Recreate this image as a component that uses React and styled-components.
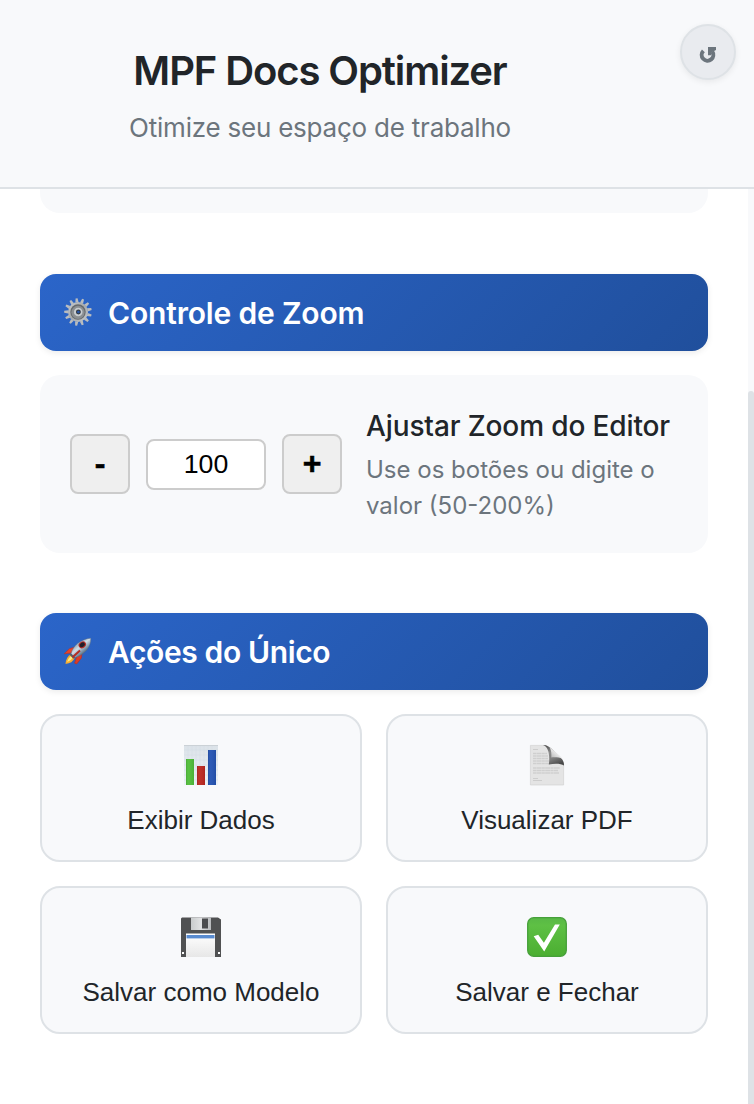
import React from "react";
import styled, { createGlobalStyle } from "styled-components";

const Global = createGlobalStyle`
  * { box-sizing: border-box; }
  body { margin: 0; background: #fff; font-family: Inter, "Liberation Sans", sans-serif; color: #212529; overflow: hidden; }
  h1, h2, h3, p { margin: 0; }
`;
const Popup = styled.div`
  display: flex; flex-direction: column; width: 754px; height: 1104px; overflow: hidden;
`;
const Header = styled.header`
  display: flex; justify-content: space-between; align-items: flex-start;
  flex: 0 0 189px; padding: 24px 18px 0 0;
  background: #f8f9fb; border-bottom: 2px solid #dee2e6;
`;
const Titles = styled.div`
  width: 640px; padding-top: 23px; text-align: center;
`;
const Title = styled.h1`
  font-size: 40px; line-height: 48px; font-weight: 600; letter-spacing: -1.1px; white-space: nowrap;
`;
const Subtitle = styled.p`
  margin-top: 14px; font-size: 26px; line-height: 38px; color: #6c757d; letter-spacing: -0.22px; white-space: nowrap;
`;
const ResetButton = styled.button`
  display: flex; align-items: center; justify-content: center;
  width: 56px; height: 56px; padding: 6px 0 0; border-radius: 50%;
  background: #e9ebef; border: 2px solid #dee2e6; box-shadow: 0 2px 6px rgba(0,0,0,.07);
`;
const Body = styled.div`
  display: flex; flex: 1; min-height: 0;
`;
const Content = styled.main`
  flex: 1; padding: 0 40px;
`;
const PreviousCard = styled.div`
  height: 24px; background: #f8f9fb; border-radius: 0 0 20px 20px; margin-bottom: 61px;
`;
const Scrollbar = styled.div`
  width: 6px; padding-top: 202px; background: #f8f9fb;
`;
const Thumb = styled.div`
  height: 800px; border-radius: 6px; background: #dee2e6;
`;
const SectionHeader = styled.h2`
  display: flex; align-items: center; gap: 16px; height: 77px; padding: 0 24px;
  margin-bottom: 24px; border-radius: 16px; color: #fff;
  background: linear-gradient(135deg, #2b65c9, #204f9c);
  box-shadow: 0 2px 6px rgba(0,0,0,.08);
  font-size: 30px; line-height: 40px; font-weight: 600; letter-spacing: ${p => p.$spacing}px; white-space: nowrap;
  svg { flex: none; position: relative; top: -1px; }
`;
const ZoomCard = styled.section`
  display: flex; align-items: center; gap: 24px; height: 178px; padding: 0 30px;
  margin-bottom: 60px; border-radius: 20px; background: #f8f9fb;
`;
const Stepper = styled.div`
  display: flex; align-items: center; gap: 16px; flex: none;
`;
const StepButton = styled.button`
  width: 60px; height: 60px; padding: 0 0 2px; border: 2px solid #ccc; border-radius: 8px;
  background: #efefef; color: #000; font: bold 32px "Liberation Sans", Arial, sans-serif;
  -webkit-text-stroke: 0.6px #000;
`;
const ZoomInput = styled.input`
  width: 120px; height: 51px; padding: 0; border: 2px solid #ccc; border-radius: 8px;
  background: #fff; color: #000; text-align: center; font: 26.7px "Liberation Sans", Arial, sans-serif;
`;
const ZoomText = styled.div`
  flex: 1; white-space: nowrap; padding-top: 1px;
`;
const ZoomTitle = styled.h3`
  font-size: 28px; line-height: 40px; font-weight: 500; letter-spacing: -0.12px; margin-bottom: 6px;
`;
const ZoomHint = styled.p`
  font-size: 24px; line-height: 36px; color: #6c757d; letter-spacing: 0;
`;
const Actions = styled.div`
  display: grid; grid-template-columns: 1fr 1fr; gap: 24px;
`;
const ActionButton = styled.button`
  display: flex; flex-direction: column; align-items: center; justify-content: flex-start; gap: 17px;
  height: 148px; padding: 27px 0 0; border: 2px solid #dee2e6; border-radius: 20px;
  background: #f8f9fb; color: #212529; white-space: nowrap;
  font: 26px/32px "Liberation Sans", Arial, sans-serif;
  svg { display: block; }
`;

const ResetIcon = () => (
  <svg width="18" height="18" viewBox="0 0 18 18" fill="none">
    <path d="M4.4 4.8A5.8 5.8 0 1 0 13.2 5.5" stroke="#6c757d" strokeWidth="4" />
    <path d="M9 1h8v3l-4.8 2.5V9.3H9z" fill="#6c757d" />
  </svg>
);

const GearIcon = () => (
  <svg width="28" height="30" viewBox="0 0 28 30">
    <defs>
      <linearGradient id="gearRim" x1="0" y1="0" x2="1" y2="1">
        <stop stopColor="#c9cccf" /><stop offset=".5" stopColor="#a6aaad" /><stop offset="1" stopColor="#c9ccce" />
      </linearGradient>
    </defs>
    {Array.from({ length: 13 }, (_, i) => (
      <path key={i} d="M12.4 5.4 13 1.2h2l.6 4.2z" fill="#b9bcbf"
        transform={`rotate(${i * 27.692 - 6} 14 15)`} />
    ))}
    <circle cx="14" cy="15" r="10" fill="url(#gearRim)" />
    <circle cx="14" cy="15" r="7.7" fill="#66696c" />
    <circle cx="14" cy="15.3" r="6.6" fill="#8b8f92" />
    <circle cx="14.2" cy="15" r="4.3" fill="#c8cccf" />
    <circle cx="14.4" cy="15" r="1.9" fill="#2857aa" stroke="#333a43" strokeWidth="1.1" />
  </svg>
);

const RocketIcon = () => (
  <svg width="28" height="30" viewBox="0 0 28 30">
    <defs>
      <linearGradient id="hull" x1=".25" y1=".2" x2=".75" y2=".8">
        <stop stopColor="#7f95a6" /><stop offset=".4" stopColor="#d2dee6" /><stop offset=".7" stopColor="#8199ad" /><stop offset="1" stopColor="#3b4c60" />
      </linearGradient>
    </defs>
    <path d="M11.5 11 5.5 12.7.2 17.8 7 17z" fill="#e8452b" stroke="#c2301f" strokeWidth=".6" />
    <path d="M12.7 20.4 18.2 15.7 17.4 22l-4.7 6-2.1-.8z" fill="#dc3c25" stroke="#b92d20" strokeWidth=".6" />
    <path d="M6.8 18.3Q2.2 20.8 1.5 28q7-.7 9.2-6z" fill="#f5ad32" />
    <path d="M7 19.8Q4 22.6 3.2 26.1q3.8-1.4 5.5-4.4z" fill="#ffed83" />
    <path d="M7.1 17.7C8.8 9.7 17 3 26.8 2.2 27.2 11 20.8 18.5 10.4 22z" fill="url(#hull)" stroke="#5c6b7b" strokeWidth=".4" />
    <path d="m6.8 17.2 4.5 4.2-1.9 1.4-3.8-3.7z" fill="#59616b" />
    <path d="m8.5 21.3 7.5-6.9" stroke="#b52d22" strokeWidth="2" />
    <ellipse cx="18.3" cy="8.8" rx="3.9" ry="3.2" transform="rotate(-35 18.3 8.8)" fill="#b42f27" />
    <ellipse cx="18.3" cy="8.8" rx="2.8" ry="2.2" transform="rotate(-35 18.3 8.8)" fill="#201e2b" />
  </svg>
);

const ChartIcon = () => (
  <svg width="40" height="44" viewBox="0 0 40 44">
    <defs>
      <linearGradient id="chartBack" x2="0" y2="1"><stop stopColor="#dbe2e8" /><stop offset="1" stopColor="#edf3f8" /></linearGradient>
      <linearGradient id="bar"><stop stopColor="#000" stopOpacity=".12" /><stop offset=".3" stopColor="#fff" stopOpacity=".04" /><stop offset="1" stopColor="#000" stopOpacity=".08" /></linearGradient>
    </defs>
    <path d="M3 2h34v40H3z" fill="url(#chartBack)" />
    <path d="M7 2v40m4-40v40m4-40v40m4-40v40m4-40v40m4-40v40m4-40v40M3 7h34M3 12h34M3 17h34M3 22h34M3 27h34M3 32h34M3 37h34" stroke="#d4dde5" strokeWidth=".45" />
    <path d="M3 2.5h34" stroke="#cbd1d6" />
    <path d="M5 16h8v26H5z" fill="#51be3a" />
    <path d="M16 23h8v19h-8z" fill="#bd2821" />
    <path d="M27 7h8v35h-8z" fill="#2453b3" />
    <path d="M5 16h8v26H5z" fill="url(#bar)" />
    <path d="M16 23h8v19h-8z" fill="url(#bar)" />
    <path d="M27 7h8v35h-8z" fill="url(#bar)" />
  </svg>
);

const PageIcon = () => (
  <svg width="40" height="44" viewBox="0 0 40 44">
    <defs>
      <linearGradient id="curl" x1=".2" y1="0" x2=".65" y2="1"><stop stopColor="#505050" /><stop offset=".35" stopColor="#8c8c8c" /><stop offset=".65" stopColor="#7d7d7d" /><stop offset="1" stopColor="#484848" /></linearGradient>
      <linearGradient id="fold" x1="0" y1="1" x2="1" y2="0"><stop stopColor="#aaa" /><stop offset=".5" stopColor="#e6e6e6" /><stop offset="1" stopColor="#fafafa" /></linearGradient>
    </defs>
    <path d="M3.4 2.4h15c5 1 5 6 5 13 8-1 13 1 13.2 6V42H3.4z" fill="#e4e4e4" stroke="#d3d3d3" strokeWidth=".7" />
    <path d="M6 6.5h5M6 35.5h5M6 37.5h9" stroke="#c6c6c6" strokeWidth=".8" />
    <path d="M6 10.5h14M6 13h15M6 15.5h15M6 18h16M6 20.5h17M6 25h27M6 27.5h25M6 30h26" stroke="#cfcfcf" strokeWidth="1.7" strokeDasharray="3 .4 5 .4" />
    <path d="M16 2c4 0 7 2 10 5l8 8c2 2 3 4 3 7.5-3-2-9-2.5-15.2-.9C23 13 22 4 16 2z" fill="url(#curl)" />
    <path d="M22.5 4.5C25 6 34 13 35.3 15.8c-3-1.4-7-1.8-11-1.3.2-3.6.2-7-1.8-10z" fill="url(#fold)" />
  </svg>
);

const FloppyIcon = () => (
  <svg width="40" height="44" viewBox="0 0 40 44">
    <defs>
      <linearGradient id="shutter"><stop stopColor="#c9cccd" /><stop offset=".5" stopColor="#e1e2e3" /><stop offset="1" stopColor="#b8babc" /></linearGradient>
      <linearGradient id="label" x2="0" y2="1"><stop stopColor="#fff" /><stop offset="1" stopColor="#e7e7e7" /></linearGradient>
    </defs>
    <path d="M1 2.5h36l3 2V42H0V3.5z" fill="#505152" />
    <path d="M10 2.5h20V15H10z" fill="url(#shutter)" />
    <path d="M21 3.5h6v10h-6z" fill="#4b4c4e" />
    <path d="M5 18.5h29V42H5z" fill="url(#label)" />
    <path d="M5.5 20h28v3h-28z" fill="#588bd0" />
    <path d="M5.5 23.5h28" stroke="#b9ceea" />
    <path d="M1 37h2v2H1zM37 37h2v2h-2z" fill="#fff" />
  </svg>
);

const CheckIcon = () => (
  <svg width="40" height="44" viewBox="0 0 40 44">
    <defs><linearGradient id="checkFill" x2="0" y2="1"><stop stopColor="#58b846" /><stop offset=".2" stopColor="#5ec044" /><stop offset="1" stopColor="#4bae31" /></linearGradient></defs>
    <rect x=".7" y="2.7" width="38.6" height="38.6" rx="6" fill="url(#checkFill)" stroke="#46a03a" strokeWidth="1.3" />
    <path d="m6.7 21.2 4.5-1.4 5.7 8L28 9.5h4.8L17.2 36.4z" fill="#fff" />
  </svg>
);

const actions = [
  { label: "Exibir Dados", Icon: ChartIcon },
  { label: "Visualizar PDF", Icon: PageIcon },
  { label: "Salvar como Modelo", Icon: FloppyIcon },
  { label: "Salvar e Fechar", Icon: CheckIcon },
];

export default function App() {
  return (
    <Popup>
      <Global />
      <Header>
        <Titles>
          <Title>MPF Docs Optimizer</Title>
          <Subtitle>Otimize seu espaço de trabalho</Subtitle>
        </Titles>
        <ResetButton aria-label="Restaurar"><ResetIcon /></ResetButton>
      </Header>
      <Body>
        <Content>
          <PreviousCard />
          <SectionHeader $spacing={-0.17}><GearIcon /><span>Controle de Zoom</span></SectionHeader>
          <ZoomCard>
            <Stepper>
              <StepButton>-</StepButton>
              <ZoomInput defaultValue="100" aria-label="Zoom" />
              <StepButton>+</StepButton>
            </Stepper>
            <ZoomText>
              <ZoomTitle>Ajustar Zoom do Editor</ZoomTitle>
              <ZoomHint>Use os botões ou digite o<br />valor (50-200%)</ZoomHint>
            </ZoomText>
          </ZoomCard>
          <SectionHeader $spacing={-0.38}><RocketIcon /><span>Ações do Único</span></SectionHeader>
          <Actions>
            {actions.map(({ label, Icon }) => (
              <ActionButton key={label}><Icon /><span>{label}</span></ActionButton>
            ))}
          </Actions>
        </Content>
        <Scrollbar><Thumb /></Scrollbar>
      </Body>
    </Popup>
  );
}
